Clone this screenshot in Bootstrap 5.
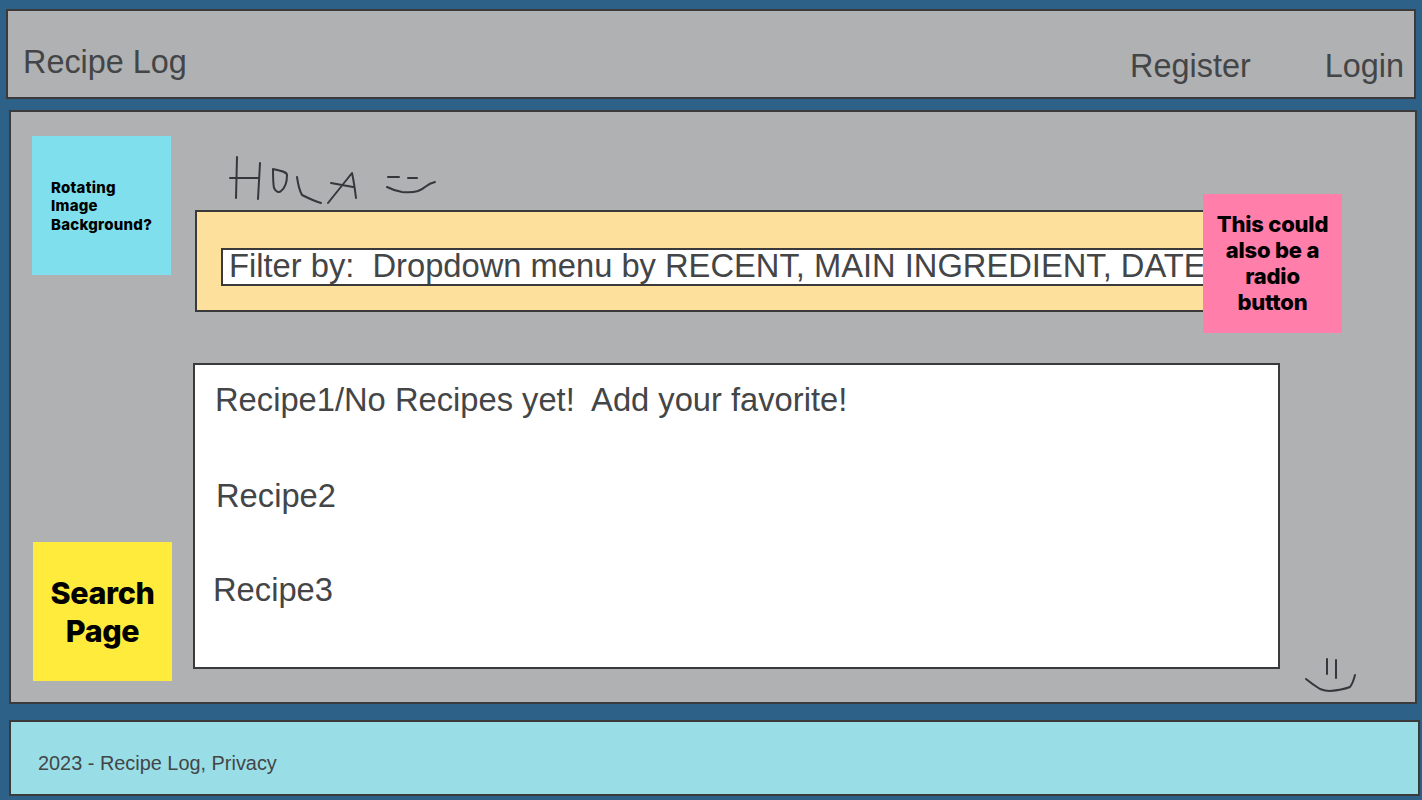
<!DOCTYPE html>
<html lang="en">
<head>
<meta charset="utf-8">
<title>Recipe Log</title>
<link rel="stylesheet" href="https://cdn.jsdelivr.net/npm/bootstrap@5.3.0/dist/css/bootstrap.min.css">
<style>
html,body{height:800px;overflow:hidden}
body{background:#2d6187;font-family:"Liberation Sans",Arial,sans-serif;color:#434547}
.frame{border:2px solid #3a3a3a;box-sizing:border-box}
.top-bar{background:#b0b1b3;width:1410px;height:90px;margin:9px 0 0 6px;padding:0 10px 0 15px;font-size:32.4px}
.brand-txt{line-height:37px;margin-top:33px}
.nav-txt{line-height:37px;margin-top:37px;color:#434547}
.nav-gap{gap:74px}
.main-area{background:#b0b1b3;width:1408px;height:594px;margin:11px 0 0 9px;padding:24px 0 0 21px;position:relative}
.note{width:139px;height:139px;color:#000;font-family:Inter,"Noto Sans",sans-serif;font-weight:800;flex:none}
.note-blue{background:#7fdfec;font-size:15px;line-height:18.5px;padding:2px 0 0 19px;letter-spacing:.25px}
.note-yellow{background:#ffeb3b;font-size:30.5px;line-height:37.5px;margin:267px 0 0 1px;letter-spacing:-.4px}
.note-pink{background:#ff7eaa;font-size:22px;line-height:26px;position:absolute;left:1192px;top:82px;letter-spacing:-.2px;padding-bottom:2px;z-index:2}
.side-col{width:141px;flex:none}
.content-col{margin-left:20px;padding-top:74px}
.filter-box{background:#fde09b;width:1044px;height:102px;margin-left:2px;padding:36px 0 0 24px}
.filter-field{background:#fff;width:1010px;height:38px;border-width:2px;font-size:32.7px;line-height:32px;padding-left:6px;white-space:pre;overflow:hidden}
.recipes{background:#fff;width:1087px;height:306px;margin-top:51px;font-size:32.7px;line-height:37px;padding:16px 0 0 20px;white-space:pre}
.rec-2{margin:59px 0 0 1px}
.rec-3{margin:57px 0 0 -2px}
.page-foot{background:#99dee6;width:1411px;height:76px;margin:16px 0 0 9px;font-size:19.9px;line-height:23px;padding:30px 0 0 27px}
.scribble{position:absolute;fill:none;stroke:#35383b;stroke-width:2;stroke-linecap:round;stroke-linejoin:round}
.scr-hola{left:208px;top:40px;width:220px;height:56px}
.scr-smile{left:1290px;top:543px;width:60px;height:45px}
</style>
</head>
<body>
<header class="frame top-bar d-flex justify-content-between">
  <div class="brand-txt">Recipe Log</div>
  <nav class="d-flex nav-gap"><div class="nav-txt">Register</div><div class="nav-txt">Login</div></nav>
</header>
<main class="frame main-area d-flex">
  <div class="side-col d-flex flex-column">
    <div class="note note-blue d-flex align-items-center">Rotating<br>Image<br>Background?</div>
    <div class="note note-yellow d-flex align-items-center justify-content-center text-center">Search<br>Page</div>
  </div>
  <div class="content-col">
    <div class="frame filter-box">
      <div class="frame filter-field">Filter by:  Dropdown menu by RECENT, MAIN INGREDIENT, DATE</div>
    </div>
    <div class="frame recipes d-flex flex-column">
      <div>Recipe1/No Recipes yet!  Add your favorite!</div>
      <div class="rec-2">Recipe2</div>
      <div class="rec-3">Recipe3</div>
    </div>
  </div>
  <div class="note note-pink d-flex align-items-center justify-content-center text-center">This could<br>also be a<br>radio<br>button</div>
  <svg class="scribble scr-hola" viewBox="219 152 220 56" aria-hidden="true">
    <path d="M237 157 236 198M230 178H258M260 163 258 199"/>
    <path d="M273 169C273 176 273 183 274 188 276 192 279 193 281 191 285 188 287 184 287 175 287 172 282 171 273 169Z"/>
    <path d="M297 177C298 184 299 190 302 195 308 198 314 201 321 203"/>
    <path d="M328 203 352 173C354 182 355 190 356 198M331 183 353 187"/>
    <path d="M388 177H399M408 178H417M387 187Q395 191 402 192 412 193 418 191 423 189 425 187 430 183 435 182"/>
  </svg>
  <svg class="scribble scr-smile" viewBox="1301 655 60 45" aria-hidden="true">
    <path d="M1327 659V674M1336 660V678"/>
    <path d="M1306 679Q1312 684 1320 689 1325 691 1330 691 1342 690 1350 687 1353 683 1355 675"/>
  </svg>
</main>
<footer class="frame page-foot">2023 - Recipe Log, Privacy</footer>
<script src="https://cdn.jsdelivr.net/npm/bootstrap@5.3.0/dist/js/bootstrap.bundle.min.js"></script>
</body>
</html>
